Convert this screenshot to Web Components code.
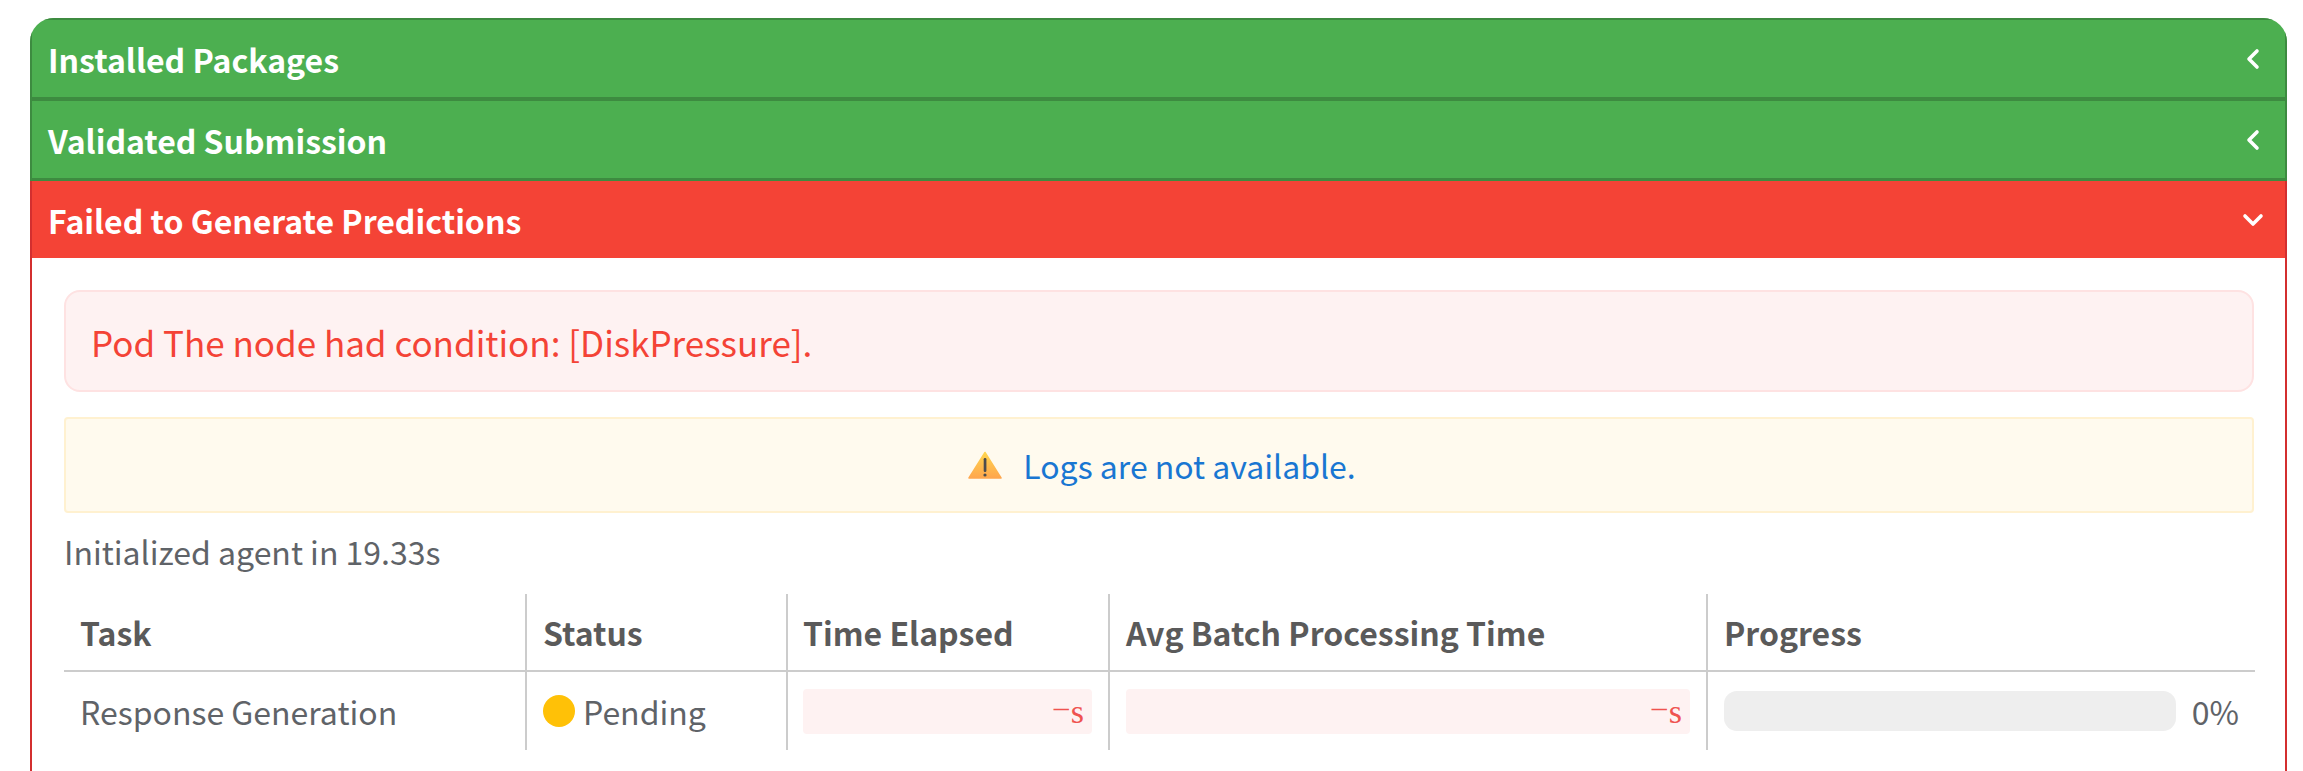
<!DOCTYPE html>
<html>
<head>
<meta charset="utf-8">
<title>Submission status</title>
<style>
    html, body {
        margin: 0;
        background: #fff;
    }
    body {
        padding: 18px 16px 0 30px;
        font-family: "Noto Sans CJK SC", "Noto Sans", sans-serif;
        color: #5a5a5a;
    }
</style>
</head>
<body>
<status-panel>
    <status-header tone="ok" title="Installed Packages"></status-header>
    <status-header tone="ok" title="Validated Submission"></status-header>
    <status-header tone="bad" title="Failed to Generate Predictions" open></status-header>
    <status-body>
        <error-note>Pod The node had condition: [DiskPressure].</error-note>
        <warn-note>Logs are not available.</warn-note>
        <div style="font-size:32px;line-height:40px;margin:18px 0 23px 0;color:#5f6368">Initialized agent in 19.33s</div>
        <task-table task="Response Generation" status="Pending" percent="0"></task-table>
    </status-body>
</status-panel>

<script>
class StatusPanel extends HTMLElement {
    connectedCallback() {
        this.attachShadow({ mode: 'open' });
        this.shadowRoot.innerHTML = `
            <style>
                :host {
                    display: block;
                    width: 2257px;
                    border-radius: 24px 24px 0 0;
                    overflow: hidden;
                }
            </style>
            <slot></slot>
        `;
    }
}

class StatusHeader extends HTMLElement {
    connectedCallback() {
        const open = this.hasAttribute('open');
        const chevron = open ? 'M5 9l8 8 8-8' : 'M17 5l-8 8 8 8';
        this.attachShadow({ mode: 'open' });
        this.shadowRoot.innerHTML = `
            <style>
                :host {
                    display: flex;
                    align-items: center;
                    justify-content: space-between;
                    box-sizing: border-box;
                    color: #fff;
                    font-size: 32px;
                    font-weight: 700;
                    line-height: 40px;
                    padding: 0 19px 0 16px;
                    border: solid transparent;
                    border-width: 0 2px;
                }
                :host([tone="ok"]) {
                    background: #4caf50;
                    border-color: #3d8b40;
                    height: 80px;
                    border-bottom: 3px solid #3d8b40;
                }
                :host([tone="ok"]:first-of-type) {
                    border-top: 2px solid #3d8b40;
                    border-bottom-width: 4px;
                    height: 83px;
                }
                :host([tone="bad"]) {
                    background: #f44336;
                    border-color: #d32f2f;
                    height: 77px;
                }
                svg {
                    width: 26px;
                    height: 26px;
                    fill: none;
                    stroke: #fff;
                    stroke-width: 3.6;
                    stroke-linecap: round;
                    stroke-linejoin: round;
                }
            </style>
            <span>${this.getAttribute('title')}</span>
            <svg viewBox="0 0 26 26"><path d="${chevron}"/></svg>
        `;
    }
}

class StatusBody extends HTMLElement {
    connectedCallback() {
        this.attachShadow({ mode: 'open' });
        this.shadowRoot.innerHTML = `
            <style>
                :host {
                    display: block;
                    box-sizing: border-box;
                    background: #fff;
                    border: solid #d32f2f;
                    border-width: 0 2px;
                    padding: 32px 31px 0 32px;
                    height: 513px;
                }
            </style>
            <slot></slot>
        `;
    }
}

class ErrorNote extends HTMLElement {
    connectedCallback() {
        this.attachShadow({ mode: 'open' });
        this.shadowRoot.innerHTML = `
            <style>
                :host {
                    display: flex;
                    align-items: center;
                    box-sizing: border-box;
                    height: 102px;
                    padding: 1px 25px 0;
                    margin-bottom: 25px;
                    background: #fef2f2;
                    border: 2px solid #fee2e2;
                    border-radius: 16px;
                    color: #f44336;
                    font-size: 35px;
                    line-height: 46px;
                }
            </style>
            <slot></slot>
        `;
    }
}

class WarnNote extends HTMLElement {
    connectedCallback() {
        this.attachShadow({ mode: 'open' });
        this.shadowRoot.innerHTML = `
            <style>
                :host {
                    display: flex;
                    align-items: center;
                    justify-content: center;
                    gap: 21px;
                    box-sizing: border-box;
                    height: 96px;
                    padding-left: 6px;
                    background: #fffaee;
                    border: 2px solid #fff1d0;
                    border-radius: 4px;
                    color: #1976d2;
                    font-size: 32px;
                    line-height: 40px;
                }
                svg {
                    width: 34px;
                    height: 28px;
                    flex: none;
                }
            </style>
            <svg viewBox="0 0 34 28">
                <defs>
                    <linearGradient id="warn" x1="0" y1="0" x2="0" y2="1">
                        <stop offset="0" stop-color="#ffd54f"/>
                        <stop offset="1" stop-color="#ffa64d"/>
                    </linearGradient>
                </defs>
                <path d="M17 1.5L33 27H1z" fill="url(#warn)" stroke="url(#warn)" stroke-width="1.5" stroke-linejoin="round"/>
                <rect x="15.7" y="7" width="2.7" height="14" rx="1.2" fill="#4d4d4d"/>
                <circle cx="17" cy="24" r="1.6" fill="#4d4d4d"/>
            </svg>
            <slot></slot>
        `;
    }
}

class TaskTable extends HTMLElement {
    connectedCallback() {
        const time = '<div class="time"><span class="dash">–</span>s</div>';
        this.attachShadow({ mode: 'open' });
        this.shadowRoot.innerHTML = `
            <style>
                :host {
                    display: grid;
                    grid-template-columns: 461px 261px 322px 598px 549px;
                    grid-template-rows: 78px 78px;
                    font-size: 32px;
                    line-height: 40px;
                    color: #5f6368;
                }
                .cell {
                    display: flex;
                    align-items: center;
                    box-sizing: border-box;
                    min-width: 0;
                    padding: 0 16px;
                    border-left: 2px solid #ccc;
                }
                .first {
                    border-left: 0;
                }
                .tight {
                    padding-left: 15px;
                }
                .head {
                    font-weight: 700;
                    color: #5a5a5a;
                    border-bottom: 2px solid #ccc;
                }
                .dot {
                    width: 32px;
                    height: 32px;
                    border-radius: 50%;
                    background: #ffc107;
                    margin-right: 8px;
                    flex: none;
                }
                .time {
                    flex: 1;
                    height: 45px;
                    background: #fef2f2;
                    border-radius: 4px;
                    color: #ef5350;
                    font-family: "Liberation Serif", serif;
                    font-size: 34px;
                    line-height: 45px;
                    text-align: right;
                    padding-right: 8px;
                }
                .dash {
                    font-size: 30px;
                    line-height: 0;
                    vertical-align: 6px;
                    margin-right: 2px;
                }
                .bar {
                    flex: 1;
                    height: 40px;
                    background: #eee;
                    border-radius: 13px;
                    margin-right: 16px;
                }
            </style>
            <div class="cell head first">Task</div>
            <div class="cell head">Status</div>
            <div class="cell head tight">Time Elapsed</div>
            <div class="cell head">Avg Batch Processing Time</div>
            <div class="cell head">Progress</div>
            <div class="cell first">${this.getAttribute('task')}</div>
            <div class="cell"><span class="dot"></span>${this.getAttribute('status')}</div>
            <div class="cell tight">${time}</div>
            <div class="cell">${time}</div>
            <div class="cell"><div class="bar"></div>${this.getAttribute('percent')}%</div>
        `;
    }
}

customElements.define('status-panel', StatusPanel);
customElements.define('status-header', StatusHeader);
customElements.define('status-body', StatusBody);
customElements.define('error-note', ErrorNote);
customElements.define('warn-note', WarnNote);
customElements.define('task-table', TaskTable);
</script>
</body>
</html>
